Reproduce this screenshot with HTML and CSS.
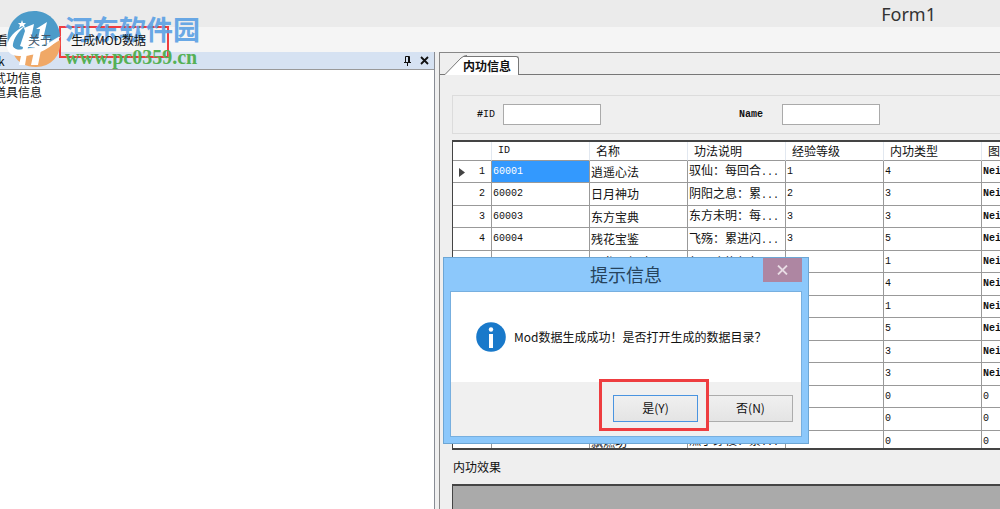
FILE: index.html
```html
<!DOCTYPE html>
<html lang="zh-CN">
<head>
<meta charset="utf-8">
<title>Form1</title>
<link rel="stylesheet" href="styles.css">
</head>
<body>
<div class="window">
  <header class="titlebar">Form1</header>
  <nav class="menubar">
    <button class="menu-item clipped">查看</button>
    <button class="menu-item about">关于</button>
    <button class="menu-item">生成MOD数据</button>
  </nav>
  <main class="workspace">
    <aside class="dock">
      <div class="dock-head">
        <span class="dock-title">k</span>
        <button class="tool" aria-label="固定"><svg width="9" height="10" viewBox="0 0 9 10"><path d="M2.5 6V.5h4V6M5.5 1v5M1 6.5h7M4.5 6.5V10" fill="none" stroke="#111"/></svg></button>
        <button class="tool" aria-label="关闭面板"><svg width="9" height="9" viewBox="0 0 9 9"><path d="M1 1l7 7M8 1L1 8" stroke="#111" stroke-width="1.8"/></svg></button>
      </div>
      <ul class="tree"><li>武功信息</li><li>道具信息</li></ul>
    </aside>
    <section class="editor">
      <div class="tabs">
        <svg class="tab-slope" width="22" height="20" viewBox="0 0 22 20"><path d="M0 19.500L16 3Q19 .5 22 .5V20H0z" fill="#fff"/><path d="M0 19.500L16 3Q19 .5 22 .5" fill="none" stroke="#777"/></svg>
        <button class="tab">内功信息</button>
      </div>
      <div class="page">
        <form class="filter">
          <label for="fid"><b>#</b>ID</label><input id="fid" type="text">
          <label class="name-label" for="fname"><b>Name</b></label><input id="fname" type="text">
        </form>
        <div class="grid">
          <table>
            <colgroup><col class="c-num"><col><col><col><col><col><col></colgroup>
            <thead><tr><th></th><th class="n">ID</th><th>名称</th><th>功法说明</th><th>经验等级</th><th>内功类型</th><th>图标</th></tr></thead>
            <tbody>
              <tr><td class="n row-no"><svg class="marker" width="6" height="9" viewBox="0 0 6 9"><path d="M0 0l6 4.500L0 9z" fill="#444"/></svg>1</td><td class="n selected">60001</td><td>逍遥心法</td><td>驭仙：每回合<span class="n">...</span></td><td class="n">1</td><td class="n">4</td><td class="n b">Nei</td></tr>
              <tr><td class="n row-no">2</td><td class="n">60002</td><td>日月神功</td><td>阴阳之息：累<span class="n">...</span></td><td class="n">2</td><td class="n">3</td><td class="n b">Nei</td></tr>
              <tr><td class="n row-no">3</td><td class="n">60003</td><td>东方宝典</td><td>东方未明：每<span class="n">...</span></td><td class="n">3</td><td class="n">3</td><td class="n b">Nei</td></tr>
              <tr><td class="n row-no">4</td><td class="n">60004</td><td>残花宝鉴</td><td>飞殇：累进闪<span class="n">...</span></td><td class="n">3</td><td class="n">5</td><td class="n b">Nei</td></tr>
              <tr><td></td><td></td><td>天龙八部功</td><td>每回合恢复每</td><td></td><td class="n">1</td><td class="n b">Nei</td></tr>
              <tr><td></td><td></td><td></td><td></td><td></td><td class="n">4</td><td class="n b">Nei</td></tr>
              <tr><td></td><td></td><td></td><td></td><td></td><td class="n">1</td><td class="n b">Nei</td></tr>
              <tr><td></td><td></td><td></td><td></td><td></td><td class="n">5</td><td class="n b">Nei</td></tr>
              <tr><td></td><td></td><td></td><td></td><td></td><td class="n">3</td><td class="n b">Nei</td></tr>
              <tr><td></td><td></td><td></td><td></td><td></td><td class="n">3</td><td class="n b">Nei</td></tr>
              <tr><td></td><td></td><td></td><td></td><td></td><td class="n">0</td><td class="n">0</td></tr>
              <tr><td></td><td></td><td></td><td></td><td></td><td class="n">0</td><td class="n">0</td></tr>
              <tr><td class="n row-no">13</td><td class="n">60013</td><td>飘燃功</td><td>燃手穿梭：累<span class="n">...</span></td><td class="n">1</td><td class="n">0</td><td class="n">0</td></tr>
            </tbody>
          </table>
        </div>
        <h2 class="effect-title">内功效果</h2>
        <div class="effect"></div>
      </div>
    </section>
  </main>
</div>

<div class="dialog" role="dialog" aria-labelledby="dt">
  <div class="dialog-head"><span id="dt">提示信息</span>
    <button class="dialog-close" aria-label="关闭"><svg width="11" height="10" viewBox="0 0 11 10"><path d="M1 .5l9 9M10 .5l-9 9" stroke="#e8dce4" stroke-width="1.800"/></svg></button>
  </div>
  <div class="dialog-body">
    <div class="message">
      <svg width="30" height="30" viewBox="0 0 30 30"><circle cx="15" cy="15" r="14.800" fill="#1979ca"/><circle cx="15" cy="7.500" r="2.200" fill="#fff"/><path d="M13 12h4v14h-4z" fill="#fff"/></svg>
      <p>Mod数据生成成功！是否打开生成的数据目录？</p>
    </div>
    <div class="actions"><button class="btn primary">是(Y)</button><button class="btn">否(N)</button></div>
  </div>
</div>
<div class="mark mark-menu"></div>
<div class="mark mark-yes"></div>
<div class="watermark">
  <svg width="56" height="58" viewBox="0 0 56 58">
    <path d="M1 34C-2 15 10 1 27 1c14 0 25 10 26 25L36 36 10 40z" fill="#4c9bc9"/>
    <path d="M7 45c17 1 32-6 46-15 2 15-9 27-24 27C19 57 11 53 7 45z" fill="#f0a866"/>
    <path d="M18 16C8 20 1 28 0 36c0 6 4 10 12 10 18 1 34-9 42-20-10 8-26 14-38 14-7 0-11-2-10-6 1-6 5-12 12-18z" fill="#fff"/>
    <path d="M17 18l10-4-3 15h7l2-10h-4l11-7-4 17 7-1-1 5-7 2-4 20h-7l4-18h-7l-3 18h-6l4-18-3-1 5-15z" fill="#fff"/>
    <path d="M15 10l1 3 3 0-2 2 1 3-3-2-3 2 1-3-2-2h3z" fill="#fff"/>
  </svg>
  <div class="brand"><span class="brand-name">河东软件园</span><span class="brand-url">www.pc0359.cn</span></div>
</div>
</body>
</html>
```
FILE: styles.css
```css
* { box-sizing: border-box; }
body { margin: 0; background: #efefef; color: #111; font: 12px/16px "Noto Sans CJK SC", sans-serif; overflow: hidden; }
button { border: 0; padding: 0; background: none; color: inherit; font: inherit; }
.window { display: flex; flex-direction: column; height: 100vh; }
.titlebar { flex: none; height: 27px; padding-right: 64px; background: #ebebeb; color: #333; text-align: right; font: 18px/28px "Noto Sans", sans-serif; }
.menubar { flex: none; display: flex; align-items: center; height: 25px; background: #f5f5f5; font-size: 12px; }
.menu-item { white-space: nowrap; position: relative; z-index: 1; }
.clipped { margin-left: -16px; }
.about { margin: 0 19px 0 20px; color: #46586a; }
.workspace { flex: 1; display: flex; gap: 4px; min-height: 0; }
.dock { flex: none; width: 435px; display: flex; flex-direction: column; border-right: 1px solid #888c94; background: #fff; }
.dock-head { display: flex; align-items: center; gap: 8px; height: 18px; padding-right: 5px; background: #d6e2f2; border-bottom: 1px solid #999; }
.dock-title { flex: 1; margin-left: -2px; font-size: 12px; }
.tool { display: flex; }
.tree { list-style: none; margin: 1px 0 0 -6px; padding: 0; line-height: 14px; }
.editor { flex: 1; min-width: 0; display: flex; flex-direction: column; border-top: 1px solid #888; border-left: 1px solid #888; }
.tabs { display: flex; align-items: flex-end; height: 22px; padding-left: 5px; box-shadow: inset 0 -1px #777; }
.tab { height: 19px; padding: 0 7px 0 0; margin-left: -4px; background: #fff; border: 1px solid #777; border-width: 1px 1px 0 0; border-top-right-radius: 3px; font-weight: 700; line-height: 16px; }
.page { flex: 1; display: flex; flex-direction: column; min-height: 0; padding: 20px 0 0 12px; }
.filter { flex: none; display: flex; align-items: center; height: 39px; margin-bottom: 6px; padding-left: 24px; border: 1px solid #dcdcdc; border-right: 0; font: 10px/16px "Liberation Mono", monospace; }
.filter input { width: 98px; height: 21px; margin-left: 8px; border: 1px solid #aaa; background: #fff; }
.filter .name-label { margin: 0 11px 0 138px; }
.grid { flex: none; height: 310px; overflow: hidden; background: #fff; border: 2px solid #444; border-width: 2px 0 2px 1px; }
table { width: 627px; table-layout: fixed; border-collapse: separate; border-spacing: 0; }
col { width: 98px; }
.c-num { width: 39px; }
th, td { padding: 0 0 0 1px; border: 1px solid #999; border-width: 0 1px 1px 0; white-space: nowrap; overflow: hidden; text-align: left; font-weight: 400; line-height: 16px; }
th { height: 19px; padding-left: 6px; border-right-color: #e2e8f0; }
tbody tr { height: 22px; }
tbody tr:nth-child(even) { height: 23px; }
.n { font-family: "Liberation Mono", monospace; font-size: 10px; }
.b { font-weight: 700; }
.row-no { padding-right: 6px; text-align: right; }
.marker { float: left; margin: 4px 0 0 5px; }
.selected { background: #3399fe; color: #fff; }
.effect-title { margin: 9px 0 9px 1px; font-size: 12px; line-height: 16px; font-weight: 400; }
.effect { flex: 1; background: #aaa; border: 1px solid #444; border-width: 2px 0 0 1px; }
.dialog { position: absolute; left: 443px; top: 257px; width: 366px; border: 1px solid #6da6d4; background: #8cc8fb; padding: 0 6px 6px; }
.dialog-head { height: 33px; text-align: center; color: #26435c; font-size: 18px; line-height: 32px; position: relative; }
.dialog-close { position: absolute; right: 0; top: 0; width: 39px; height: 24px; display: flex; align-items: center; justify-content: center; background: #ae86a2; }
.dialog-body { border: 1px solid #77afdf; background: #fff; }
.message { display: flex; align-items: center; gap: 8px; height: 90px; padding-left: 25px; }
.message p { margin: 0; white-space: nowrap; }
.actions { display: flex; justify-content: flex-end; align-items: center; gap: 10px; height: 54px; padding: 0 8px 2px 0; background: #f0f0f0; }
.btn { width: 85px; height: 27px; border: 1px solid #acacac; background: linear-gradient(#f0f0f0, #e4e4e4); }
.btn.primary { border-color: #4a94e0; }
.mark { position: absolute; border: 3px solid #ee3d40; pointer-events: none; }
.mark-menu { left: 59px; top: 26px; width: 110px; height: 32px; border-width: 2px; }
.mark-yes { left: 599px; top: 379px; width: 110px; height: 52px; }
.watermark { position: absolute; left: 7px; top: 10px; display: flex; gap: 2px; pointer-events: none; }
.brand { display: flex; flex-direction: column; padding-top: 4px; white-space: nowrap; }
.brand-name { color: #5aa0e4; font-size: 27px; line-height: 30px; font-weight: 700; opacity: .9; }
.brand-url { color: #55b055; font: 700 20px/26px "Liberation Serif", serif; }
```
